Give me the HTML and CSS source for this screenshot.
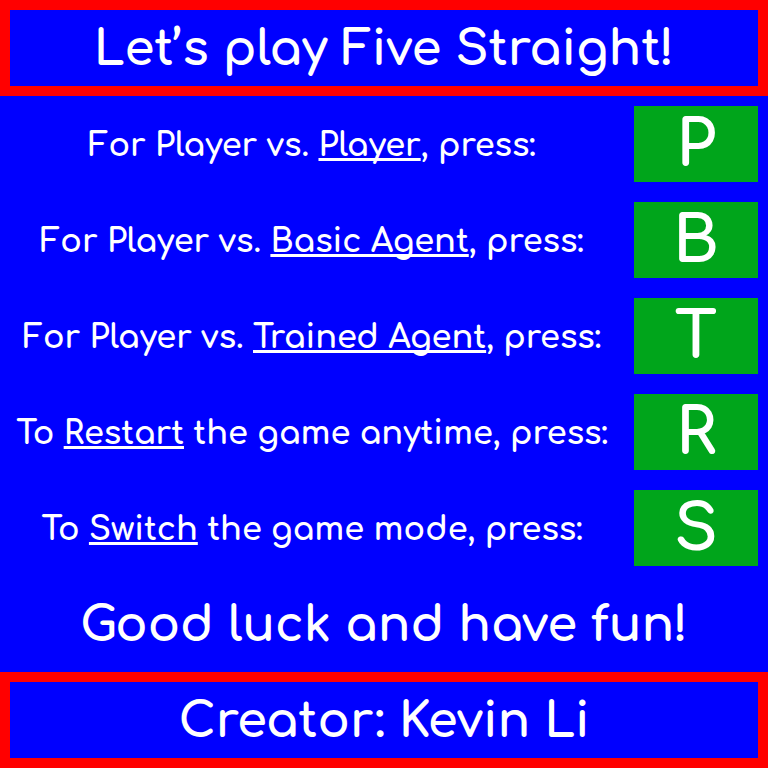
FILE: index.html
```html
<!DOCTYPE html>
<html lang="en">
<head>
<meta charset="utf-8">
<title>Five Straight</title>
<link rel="stylesheet" href="styles.css">
</head>
<body>
<header class="banner"><h1 class="headline">Let’s play Five Straight!</h1></header>
<main class="menu">
<div class="row"><p class="prompt">For Player vs. <u>Player</u>, press:</p><button class="key" type="button">P</button></div>
<div class="row"><p class="prompt">For Player vs. <u>Basic Agent</u>, press:</p><button class="key" type="button">B</button></div>
<div class="row"><p class="prompt">For Player vs. <u>Trained Agent</u>, press:</p><button class="key" type="button">T</button></div>
<div class="row"><p class="prompt">To <u>Restart</u> the game anytime, press:</p><button class="key" type="button">R</button></div>
<div class="row"><p class="prompt">To <u>Switch</u> the game mode, press:</p><button class="key" type="button">S</button></div>
<p class="headline farewell">Good luck and have fun!</p>
</main>
<footer class="banner"><p class="headline">Creator: Kevin Li</p></footer>
</body>
</html>
```
FILE: styles.css
```css
* {
  box-sizing: border-box;
}

body {
  margin: 0;
  background: #0000ff;
  color: #ffffff;
  font-family: Comfortaa, Quicksand, Lato, sans-serif;
  font-weight: 700;
}

.banner {
  padding: 10px 0 6px;
  border: 10px solid #ff0000;
}

.headline {
  margin: 0;
  font-size: 48px;
  font-weight: 700;
  line-height: 60px;
  text-align: center;
  white-space: nowrap;
}

.row {
  display: grid;
  grid-template-columns: 1fr 124px;
  column-gap: 20px;
  align-items: center;
  padding: 10px;
}

.prompt {
  margin: 0;
  padding-top: 4px;
  font-size: 32px;
  line-height: 40px;
  text-align: center;
  white-space: nowrap;
}

.prompt u {
  display: inline-block;
  text-decoration-thickness: 3px;
  text-underline-offset: 2px;
  text-decoration-skip-ink: none;
}

.key {
  height: 76px;
  padding: 4px 0 0;
  border: 0;
  background: #00a51b;
  color: inherit;
  font: inherit;
  font-size: 64px;
  line-height: 72px;
}

.farewell {
  padding: 20px 0 16px;
}
```
